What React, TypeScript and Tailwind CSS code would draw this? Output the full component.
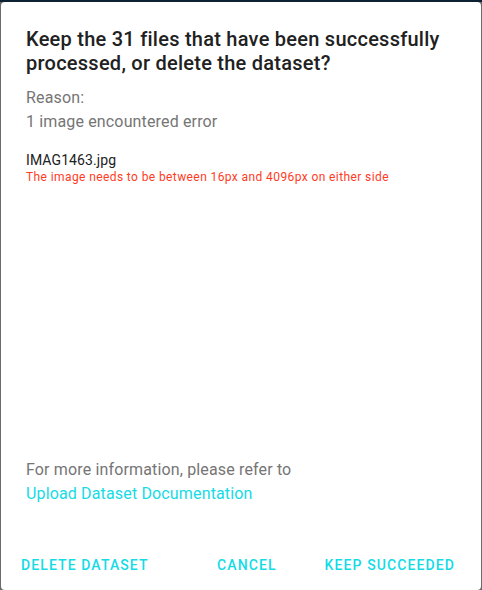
export default function App() {
  return (
    <div className="h-[590px] w-[482px] overflow-hidden bg-[#6b6b6b] font-['Roboto',sans-serif]">
      <div className="h-[2px] bg-[#0c2131]" />
      <div className="mx-px flex h-[588px] flex-col rounded-[4px] bg-white">
        <div className="px-[25px] pt-[25px]">
          <h2 className="text-[20px] font-medium leading-[24px] tracking-[0.25px] text-[#212121]">
            Keep the 31 files that have been successfully processed, or delete the dataset?
          </h2>
          <div className="mt-[11px] text-[16px] leading-[24px] tracking-[0.15px] text-[#757575]">
            <p>Reason:</p>
            <p>1 image encountered error</p>
          </div>
          <div className="mt-[17px]">
            <p className="text-[14px] leading-[18px] tracking-[0.1px] text-[#212121]">IMAG1463.jpg</p>
            <p className="text-[12px] leading-[16px] tracking-[0.4px] text-[#ff3b1f]">
              The image needs to be between 16px and 4096px on either side
            </p>
          </div>
        </div>
        <div className="mt-auto px-[25px] text-[16px] leading-[24px] tracking-[0.15px]">
          <p className="text-[#757575]">For more information, please refer to</p>
          <a className="text-[#14dbe6]">Upload Dataset Documentation</a>
        </div>
        <div className="mt-[41px] mb-[7px] flex items-center px-[4px] text-[14px] font-medium tracking-[1.1px] text-[#14dbe6]">
          <button className="h-[36px] px-[16px] uppercase">Delete Dataset</button>
          <div className="flex-1" />
          <button className="h-[36px] px-[16px] uppercase">Cancel</button>
          <button className="ml-[16px] mr-[6px] h-[36px] px-[16px] uppercase">Keep Succeeded</button>
        </div>
      </div>
    </div>
  );
}
